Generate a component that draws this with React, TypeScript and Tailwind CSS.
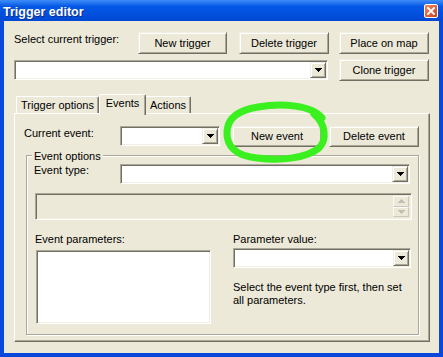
import React from "react";

const raised =
  "border border-t-[#f1efe2] border-l-[#f1efe2] border-r-[#716f64] border-b-[#716f64] shadow-[inset_1px_1px_0_#ffffff,inset_-1px_-1px_0_#aca899] bg-[#ece9d8]";
const sunken =
  "border border-t-[#aca899] border-l-[#aca899] border-r-white border-b-white shadow-[inset_1px_1px_0_#716f64,inset_-1px_-1px_0_#f1efe2]";

function Btn({ children, className = "" }: { children: React.ReactNode; className?: string }) {
  return (
    <div className={`${raised} flex items-center justify-center whitespace-nowrap ${className}`}>
      {children}
    </div>
  );
}

function Arrow({ up = false, color = "#000" }: { up?: boolean; color?: string }) {
  return (
    <svg width="7" height="4" viewBox="0 0 7 4" className={up ? "rotate-180" : ""}>
      <path d="M0 0h7v1h-1v1h-1v1h-1v1h-1v-1h-1v-1h-1v-1h-1z" fill={color} />
    </svg>
  );
}

function Combo({ className = "" }: { className?: string }) {
  return (
    <div className={`${sunken} bg-white p-[1px] flex justify-end ${className}`}>
      <div className={`${raised} w-[16px] h-full flex items-center justify-center`}>
        <Arrow />
      </div>
    </div>
  );
}

function SpinHalf({ up }: { up?: boolean }) {
  return (
    <div className="flex-1 flex items-center justify-center border border-t-[#fbfaf6] border-l-[#fbfaf6] border-r-[#cbc8bb] border-b-[#cbc8bb] bg-[#ece9d8]">
      <Arrow up={up} color="#c2bfb1" />
    </div>
  );
}

export default function App() {
  return (
    <div className="relative w-[443px] h-[357px] bg-[#0a48dc] flex flex-col font-['Liberation_Sans',Arial,sans-serif] text-[11px] leading-[13px] text-black overflow-hidden">
      {/* Title bar */}
      <div className="h-[21px] shrink-0 flex items-center justify-between pl-[3px] pr-[5px] bg-linear-to-b from-[#3d8df8] via-[#0458e6] via-30% to-[#0148d4]">
        <span className="mt-[2px] text-white font-bold text-[12.5px] leading-[16px] [text-shadow:1px_1px_0_#0b2e8f]">
          Trigger editor
        </span>
        <div className="w-[14px] h-[14px] rounded-[2px] border border-white bg-linear-to-br from-[#ec8a66] to-[#c9411c] flex items-center justify-center">
          <svg width="8" height="8" viewBox="0 0 8 8">
            <path d="M1 1L7 7M7 1L1 7" stroke="#fff" strokeWidth="1.8" strokeLinecap="square" />
          </svg>
        </div>
      </div>

      {/* Client area */}
      <div className="flex-1 mx-[4px] mb-[4px] bg-[#ece9d8] flex flex-col px-[10px] pt-[11px]">
        {/* Row 1 */}
        <div className="flex items-start h-[22px]">
          <span className="w-[124px] pt-[1px] whitespace-nowrap">Select current trigger:</span>
          <Btn className="w-[89px] h-[22px]">New trigger</Btn>
          <Btn className="ml-[12px] w-[90px] h-[22px]">Delete trigger</Btn>
          <Btn className="ml-[10px] w-[90px] h-[22px]">Place on map</Btn>
        </div>

        {/* Row 2 */}
        <div className="flex items-center mt-[5px]">
          <Combo className="w-[314px] h-[20px]" />
          <Btn className="ml-[11px] w-[90px] h-[22px]">Clone trigger</Btn>
        </div>

        {/* Tabs */}
        <div className="relative z-10 flex items-end h-[19px] mt-[13px] pl-[2px]">
          <div className="w-[83px] h-[17px] pt-[2px] text-center border-l border-t border-l-white border-t-white border-r border-r-[#716f64] shadow-[inset_-1px_0_0_#aca899] rounded-tl-[2px] rounded-tr-[2px] whitespace-nowrap">
            Trigger options
          </div>
          <div className="w-[47px] h-[21px] -mb-[2px] pt-[2px] text-center bg-[#ece9d8] border-l border-t border-l-white border-t-white border-r border-r-[#716f64] shadow-[inset_-1px_0_0_#aca899] rounded-tl-[2px] rounded-tr-[2px]">
            Events
          </div>
          <div className="w-[45px] h-[17px] pt-[2px] text-center border-t border-t-white border-r border-r-[#716f64] shadow-[inset_-1px_0_0_#aca899] rounded-tr-[2px]">
            Actions
          </div>
        </div>

        {/* Tab panel */}
        <div className="w-[416px] h-[229px] border border-t-white border-l-white border-r-[#716f64] border-b-[#716f64] shadow-[inset_-1px_-1px_0_#aca899] flex flex-col pt-[12px] pl-[9px]">
          <div className="flex items-start h-[21px]">
            <span className="w-[96px] pt-[1px] whitespace-nowrap">Current event:</span>
            <Combo className="w-[100px] h-[20px]" />
            <Btn className="ml-[12px] w-[90px] h-[21px]">New event</Btn>
            <Btn className="ml-[7px] w-[90px] h-[21px]">Delete event</Btn>
          </div>

          {/* Group box */}
          <div className="relative mt-[8px] ml-[2px] w-[393px] h-[180px] border border-[#aca899] shadow-[inset_1px_1px_0_#ffffff,1px_1px_0_#ffffff] pl-[7px] pt-[8px] flex flex-col">
            <span className="absolute left-[5px] top-[-6px] bg-[#ece9d8] px-[2px] whitespace-nowrap">
              Event options
            </span>
            <div className="flex items-start">
              <span className="w-[86px] whitespace-nowrap">Event type:</span>
              <Combo className="w-[290px] h-[20px]" />
            </div>
            <div className={`${sunken} mt-[9px] ml-[1px] w-[377px] h-[27px] bg-[#ece9d8] p-[2px] flex justify-end`}>
              <div className="w-[16px] h-full flex flex-col">
                <SpinHalf up />
                <SpinHalf />
              </div>
            </div>
            <div className="flex mt-[13px]">
              <div className="ml-[1px] w-[198px] flex flex-col">
                <span className="whitespace-nowrap">Event parameters:</span>
                <div className={`${sunken} mt-[4px] ml-[1px] w-[175px] h-[74px] bg-white`} />
              </div>
              <div className="flex flex-col">
                <span className="whitespace-nowrap">Parameter value:</span>
                <Combo className="mt-[2px] w-[178px] h-[20px]" />
                <p className="mt-[13px] whitespace-nowrap">
                  Select the event type first, then set
                  <br />
                  all parameters.
                </p>
              </div>
            </div>
          </div>
        </div>
      </div>

      {/* Green marker scribble over the "New event" button */}
      <svg
        className="absolute left-0 top-0 pointer-events-none"
        width="443"
        height="357"
        viewBox="0 0 443 357"
      >
        <path
          d="M322 118 C312 105, 282 103, 258 107 C239 110, 228 118, 227 131 C226 146, 236 156, 257 158 C281 161, 307 158, 319 148 C327 140, 326 124, 314 114"
          fill="none"
          stroke="#3af01e"
          strokeWidth="7"
          strokeLinecap="round"
          strokeLinejoin="round"
        />
      </svg>
    </div>
  );
}
